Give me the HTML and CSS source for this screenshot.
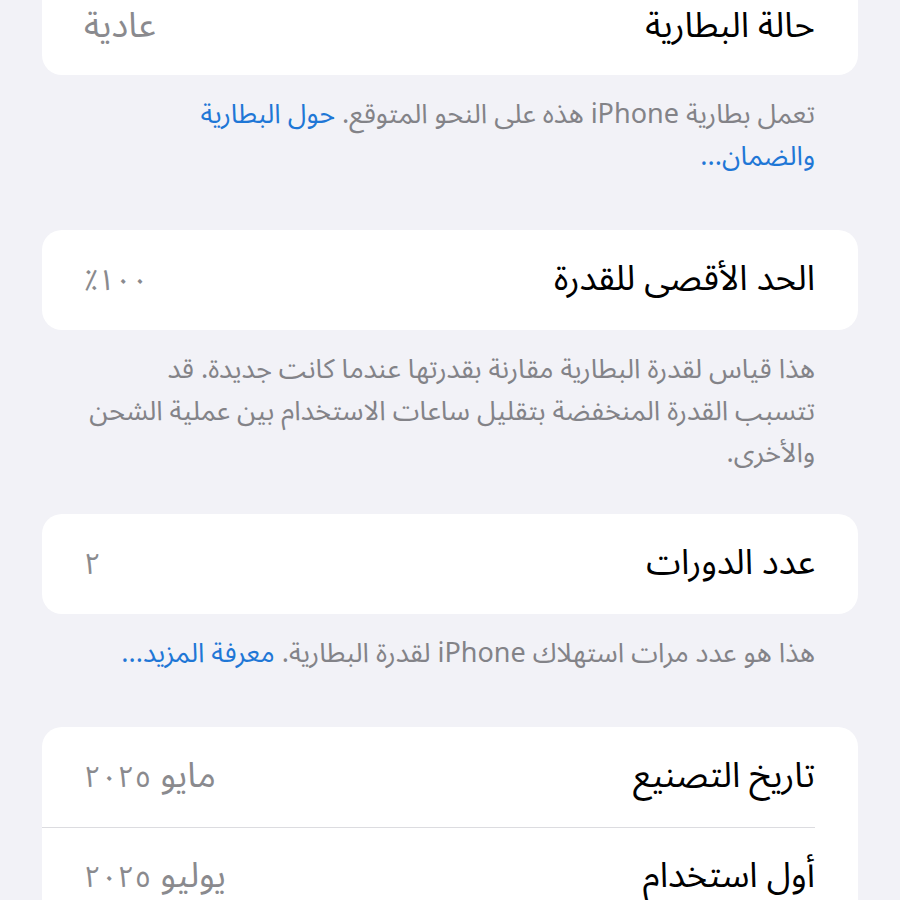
FILE: index.html
```html
<!DOCTYPE html>
<html lang="ar" dir="rtl">
<head>
    <meta charset="UTF-8">
    <meta name="viewport" content="width=device-width, initial-scale=1.0">
    <title>صحة البطارية</title>
    <link rel="stylesheet" href="styles.css">
</head>
<body>
    <div class="card cut">
        <div class="row">
            <span class="label">حالة البطارية</span>
            <span class="value">عادية</span>
        </div>
    </div>
    <p class="note">تعمل بطارية iPhone هذه على النحو المتوقع. <a href="#">حول البطارية والضمان...</a></p>

    <div class="card">
        <div class="row">
            <span class="label">الحد الأقصى للقدرة</span>
            <span class="value"><span class="num">١٠٠٪</span></span>
        </div>
    </div>
    <p class="note tight">هذا قياس لقدرة البطارية مقارنة بقدرتها عندما كانت جديدة. قد تتسبب القدرة المنخفضة بتقليل ساعات الاستخدام بين عملية الشحن والأخرى.</p>

    <div class="card">
        <div class="row">
            <span class="label">عدد الدورات</span>
            <span class="value"><span class="num">٢</span></span>
        </div>
    </div>
    <p class="note">هذا هو عدد مرات استهلاك iPhone لقدرة البطارية. <a href="#">معرفة المزيد...</a></p>

    <div class="card">
        <div class="row">
            <span class="label">تاريخ التصنيع</span>
            <span class="value">مايو <span class="num">٢٠٢٥</span></span>
        </div>
        <div class="row">
            <span class="label">أول استخدام</span>
            <span class="value">يوليو <span class="num">٢٠٢٥</span></span>
        </div>
    </div>
</body>
</html>
```

FILE: styles.css
```css
body {
    margin: 0;
    background-color: #f2f2f7;
    font-family: "Noto Sans Arabic", "DejaVu Sans", sans-serif;
    overflow: hidden;
}

.card {
    background-color: #fff;
    border-radius: 20px;
    margin: 0 42px;
    overflow: hidden;
}

/* first group is scrolled partly off the top */
.card.cut {
    border-radius: 0 0 20px 20px;
}

.row {
    display: flex;
    justify-content: space-between;
    align-items: center;
    height: 100px;
    padding: 0 43px 0 42px;
    position: relative;
}

.card.cut .row {
    height: 54px;
    padding-bottom: 21px;
}

.row + .row::before {
    content: "";
    position: absolute;
    top: 0;
    left: 0;
    right: 43px;
    border-top: 1px solid #dcdce0;
}

.label,
.value {
    font-size: 35px;
    line-height: 1.3;
}

.label {
    color: #000;
}

.value {
    color: #8a8a8e;
}

.num {
    font-size: 0.84em;
}

.note {
    margin: 0 85px 52px 88px;
    padding-top: 19px;
    font-size: 27px;
    line-height: 42px;
    color: #838388;
}

.note.tight {
    margin-bottom: 39px;
}

.note a {
    color: #1f77d6;
    text-decoration: none;
}
```
